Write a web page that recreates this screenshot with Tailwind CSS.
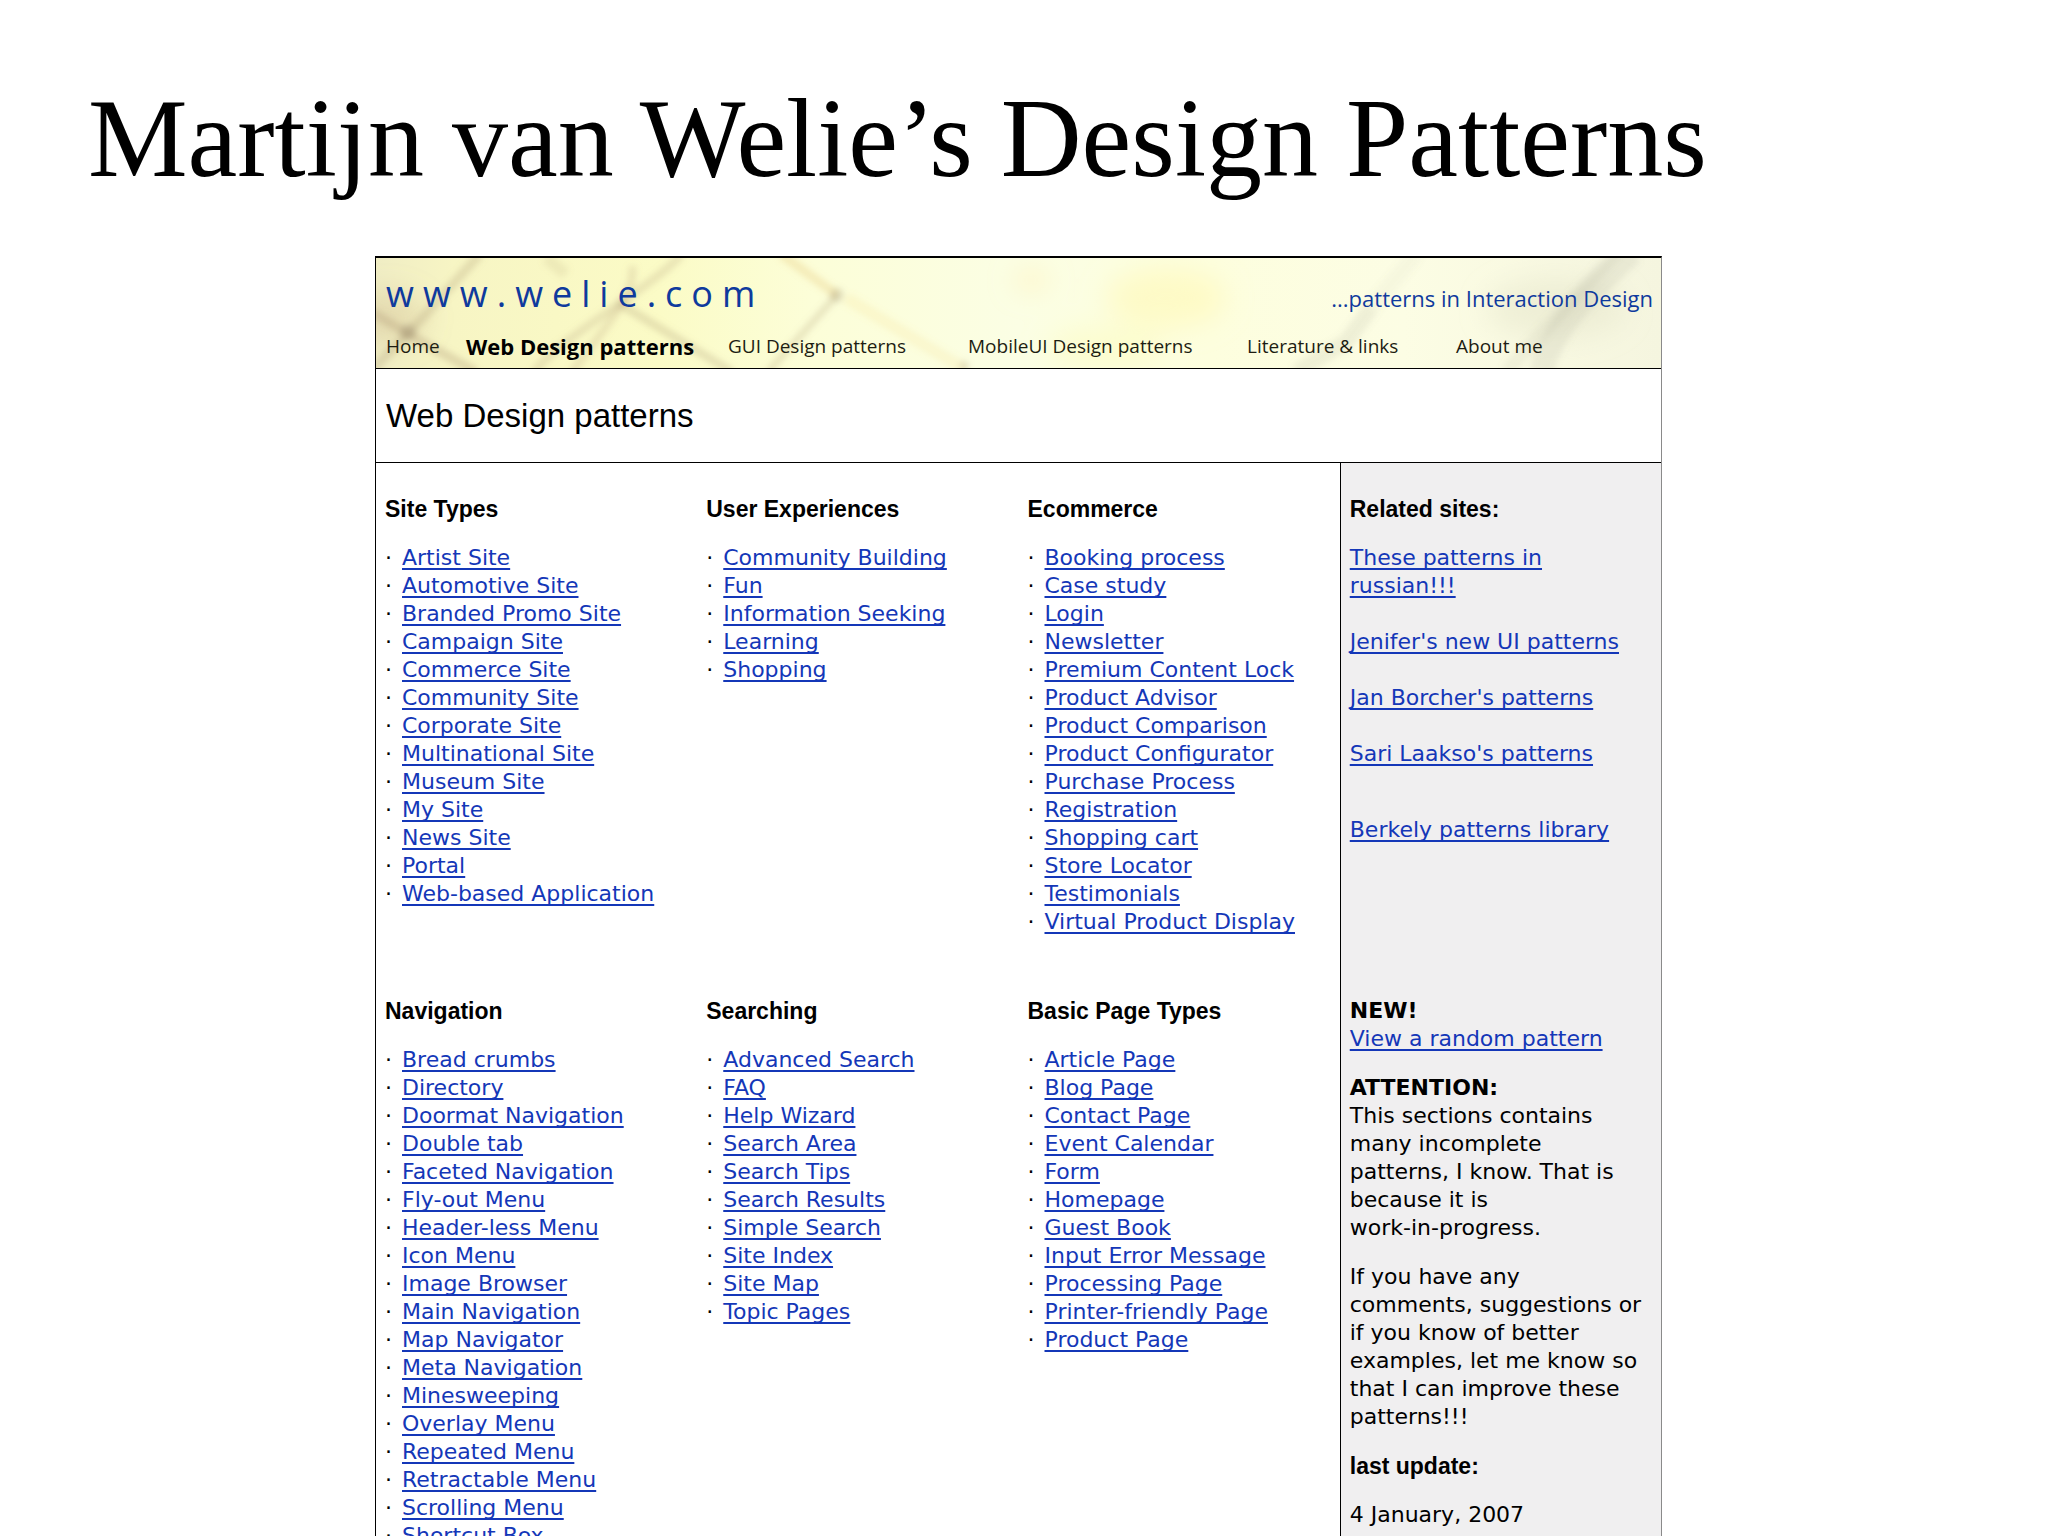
<!DOCTYPE html>
<html lang="en">

<head>
    <meta charset="UTF-8" />
    <meta name="viewport" content="width=device-width, initial-scale=1.0" />
    <title>Martijn van Welie's Design Patterns</title>
    <script src="https://cdn.jsdelivr.net/npm/@tailwindcss/browser@4"></script>
</head>

<body class="h-screen overflow-hidden bg-white text-black">
    <h1 class="pt-[70px] pl-[88px] h-[256px] text-[112px] leading-[136px] whitespace-nowrap font-['Liberation_Serif',serif]">Martijn van Welie’s Design Patterns</h1>

    <div class="ml-[375px] mr-[386px] border-t-2 border-l border-r border-t-black border-l-black border-r-[#8a8a8a] font-['DejaVu_Sans',sans-serif] text-[22px] leading-[28px]">
        <!-- banner -->
        <header class="relative h-[111px] border-b border-black overflow-hidden font-['Open_Sans',sans-serif]">
            <svg class="absolute inset-0 w-full h-full" viewBox="0 0 1285 110" preserveAspectRatio="none" aria-hidden="true">
                <defs>
                    <linearGradient id="paper" x1="0" x2="1" y1="0" y2="0">
                        <stop offset="0" stop-color="#f0edc4" />
                        <stop offset=".06" stop-color="#f7f5c4" />
                        <stop offset=".22" stop-color="#fbfbc6" />
                        <stop offset=".34" stop-color="#fcfed8" />
                        <stop offset=".5" stop-color="#fbfee4" />
                        <stop offset=".65" stop-color="#fdfede" />
                        <stop offset=".8" stop-color="#fcfde4" />
                        <stop offset="1" stop-color="#f5f5df" />
                    </linearGradient>
                    <filter id="soft" x="-10%" y="-10%" width="120%" height="120%">
                        <feGaussianBlur stdDeviation="3" />
                    </filter>
                    <filter id="haze" x="-50%" y="-50%" width="200%" height="200%">
                        <feGaussianBlur stdDeviation="14" />
                    </filter>
                </defs>
                <rect width="1285" height="110" fill="url(#paper)" />
                <g filter="url(#haze)">
                    <ellipse cx="790" cy="40" rx="60" ry="30" fill="#fff6a8" fill-opacity=".45" />
                    <ellipse cx="730" cy="90" rx="60" ry="20" fill="#fdf9a8" fill-opacity=".35" />
                    <ellipse cx="655" cy="22" rx="16" ry="10" fill="#ffe9a0" fill-opacity=".5" />
                    <ellipse cx="10" cy="60" rx="40" ry="26" fill="#c8b080" fill-opacity=".3" />
                    <ellipse cx="1180" cy="50" rx="70" ry="30" fill="#dcdcc0" fill-opacity=".35" />
                </g>
                <g filter="url(#soft)" fill="none" stroke="#a8926c">
                    <path d="M104 -4L32 76L-4 112" stroke-width="9" stroke-opacity=".26" />
                    <path d="M-4 54L32 76L100 114" stroke-width="9" stroke-opacity=".3" />
                    <path d="M306 -4C276 30 186 78 158 114" stroke-width="8" stroke-opacity=".22" />
                    <path d="M256 8C262 36 220 80 196 114" stroke-width="8" stroke-opacity=".2" />
                    <path d="M244 46L300 80L356 114" stroke-width="8" stroke-opacity=".26" />
                    <path d="M170 0L190 16" stroke-width="12" stroke-opacity=".14" />
                    <path d="M461 37L392 114" stroke-width="7" stroke-opacity=".24" />
                    <path d="M405 -4L461 37" stroke="#e0b860" stroke-width="9" stroke-opacity=".26" />
                    <path d="M470 40L590 112" stroke="#f0d060" stroke-width="12" stroke-opacity=".14" />
                    <circle cx="32" cy="74" r="8" fill="#8a7a60" fill-opacity=".28" stroke="none" />
                    <circle cx="461" cy="37" r="7" fill="#8a7a60" fill-opacity=".22" stroke="none" />
                    <circle cx="588" cy="108" r="5" fill="#8a7a60" fill-opacity=".2" stroke="none" />
                </g>
                <g filter="url(#soft)" fill="none" stroke="#8c8c78">
                    <path d="M1256 -6C1220 30 1180 60 1165 114" stroke-width="24" stroke-opacity=".13" />
                    <path d="M1240 -6L1130 114" stroke-width="14" stroke-opacity=".09" />
                    <path d="M995 50L970 84L920 114" stroke-width="16" stroke-opacity=".12" />
                    <path d="M1040 -4L995 50" stroke-width="16" stroke-opacity=".05" />
                </g>
            </svg>
            <div class="relative flex items-center justify-between pl-[10px] pr-[8px] h-[72px] text-[#0f3a9d]">
                <a href="#" class="text-[36px] tracking-[9px]">www.welie.com</a>
                <span class="pt-2 text-[22px]">...patterns in Interaction Design</span>
            </div>
            <nav class="relative grid grid-cols-[80fr_262fr_240fr_279fr_209fr_205fr] pl-[10px] h-[32px] items-center whitespace-nowrap text-[19px] text-[#1d1d12]">
                <a href="#">Home</a>
                <a href="#" class="text-[22px] font-bold text-black">Web Design patterns</a>
                <a href="#">GUI Design patterns</a>
                <a href="#">MobileUI Design patterns</a>
                <a href="#">Literature &amp; links</a>
                <a href="#">About me</a>
            </nav>
        </header>

        <h2 class="flex items-center h-[94px] pl-[10px] border-b border-black text-[33px] font-['Liberation_Sans',sans-serif]">Web Design patterns</h2>

        <!-- pattern index, last column is the sidebar -->
        <div class="grid grid-cols-4 [&>*]:px-[9px] [&>*]:pt-8 [&_h3]:mb-[21px] [&_h3]:text-[23px] [&_h3]:font-bold [&_h3]:font-['Liberation_Sans',sans-serif] [&_li]:whitespace-nowrap [&_section_li]:before:inline-block [&_section_li]:before:w-[17px] [&_section_li]:before:content-['·'] [&_a]:text-[#1437b8] [&_a]:underline [&_a]:decoration-2 [&_a]:underline-offset-[3px] [&_a]:[text-decoration-skip-ink:none]">
            <section>
                <h3>Site Types</h3>
                <ul>
                    <li><a href="#">Artist Site</a></li>
                    <li><a href="#">Automotive Site</a></li>
                    <li><a href="#">Branded Promo Site</a></li>
                    <li><a href="#">Campaign Site</a></li>
                    <li><a href="#">Commerce Site</a></li>
                    <li><a href="#">Community Site</a></li>
                    <li><a href="#">Corporate Site</a></li>
                    <li><a href="#">Multinational Site</a></li>
                    <li><a href="#">Museum Site</a></li>
                    <li><a href="#">My Site</a></li>
                    <li><a href="#">News Site</a></li>
                    <li><a href="#">Portal</a></li>
                    <li><a href="#">Web-based Application</a></li>
                </ul>
            </section>
            <section>
                <h3>User Experiences</h3>
                <ul>
                    <li><a href="#">Community Building</a></li>
                    <li><a href="#">Fun</a></li>
                    <li><a href="#">Information Seeking</a></li>
                    <li><a href="#">Learning</a></li>
                    <li><a href="#">Shopping</a></li>
                </ul>
            </section>
            <section class="pb-[29px]">
                <h3>Ecommerce</h3>
                <ul>
                    <li><a href="#">Booking process</a></li>
                    <li><a href="#">Case study</a></li>
                    <li><a href="#">Login</a></li>
                    <li><a href="#">Newsletter</a></li>
                    <li><a href="#">Premium Content Lock</a></li>
                    <li><a href="#">Product Advisor</a></li>
                    <li><a href="#">Product Comparison</a></li>
                    <li><a href="#">Product Configurator</a></li>
                    <li><a href="#">Purchase Process</a></li>
                    <li><a href="#">Registration</a></li>
                    <li><a href="#">Shopping cart</a></li>
                    <li><a href="#">Store Locator</a></li>
                    <li><a href="#">Testimonials</a></li>
                    <li><a href="#">Virtual Product Display</a></li>
                </ul>
            </section>
            <aside class="border-l border-black bg-[#f0eff0]">
                <h3>Related sites:</h3>
                <ul class="flex flex-col gap-7">
                    <li><a href="#">These patterns in<br />russian!!!</a></li>
                    <li><a href="#">Jenifer's new UI patterns</a></li>
                    <li><a href="#">Jan Borcher's patterns</a></li>
                    <li><a href="#">Sari Laakso's patterns</a></li>
                    <li class="pt-5"><a href="#">Berkely patterns library</a></li>
                </ul>
            </aside>

            <section>
                <h3>Navigation</h3>
                <ul>
                    <li><a href="#">Bread crumbs</a></li>
                    <li><a href="#">Directory</a></li>
                    <li><a href="#">Doormat Navigation</a></li>
                    <li><a href="#">Double tab</a></li>
                    <li><a href="#">Faceted Navigation</a></li>
                    <li><a href="#">Fly-out Menu</a></li>
                    <li><a href="#">Header-less Menu</a></li>
                    <li><a href="#">Icon Menu</a></li>
                    <li><a href="#">Image Browser</a></li>
                    <li><a href="#">Main Navigation</a></li>
                    <li><a href="#">Map Navigator</a></li>
                    <li><a href="#">Meta Navigation</a></li>
                    <li><a href="#">Minesweeping</a></li>
                    <li><a href="#">Overlay Menu</a></li>
                    <li><a href="#">Repeated Menu</a></li>
                    <li><a href="#">Retractable Menu</a></li>
                    <li><a href="#">Scrolling Menu</a></li>
                    <li><a href="#">Shortcut Box</a></li>
                </ul>
            </section>
            <section>
                <h3>Searching</h3>
                <ul>
                    <li><a href="#">Advanced Search</a></li>
                    <li><a href="#">FAQ</a></li>
                    <li><a href="#">Help Wizard</a></li>
                    <li><a href="#">Search Area</a></li>
                    <li><a href="#">Search Tips</a></li>
                    <li><a href="#">Search Results</a></li>
                    <li><a href="#">Simple Search</a></li>
                    <li><a href="#">Site Index</a></li>
                    <li><a href="#">Site Map</a></li>
                    <li><a href="#">Topic Pages</a></li>
                </ul>
            </section>
            <section>
                <h3>Basic Page Types</h3>
                <ul>
                    <li><a href="#">Article Page</a></li>
                    <li><a href="#">Blog Page</a></li>
                    <li><a href="#">Contact Page</a></li>
                    <li><a href="#">Event Calendar</a></li>
                    <li><a href="#">Form</a></li>
                    <li><a href="#">Homepage</a></li>
                    <li><a href="#">Guest Book</a></li>
                    <li><a href="#">Input Error Message</a></li>
                    <li><a href="#">Processing Page</a></li>
                    <li><a href="#">Printer-friendly Page</a></li>
                    <li><a href="#">Product Page</a></li>
                </ul>
            </section>
            <aside class="flex flex-col gap-[21px] border-l border-black bg-[#f0eff0] whitespace-nowrap">
                <p><b>NEW!</b><br /><a href="#">View a random pattern</a></p>
                <p><b>ATTENTION:</b><br />This sections contains<br />many incomplete<br />patterns, I know. That is<br />because it is<br />work-in-progress.</p>
                <p>If you have any<br />comments, suggestions or<br />if you know of better<br />examples, let me know so<br />that I can improve these<br />patterns!!!</p>
                <p class="text-[23px] font-bold font-['Liberation_Sans',sans-serif]">last update:</p>
                <p>4 January, 2007</p>
            </aside>
        </div>
    </div>
</body>

</html>
